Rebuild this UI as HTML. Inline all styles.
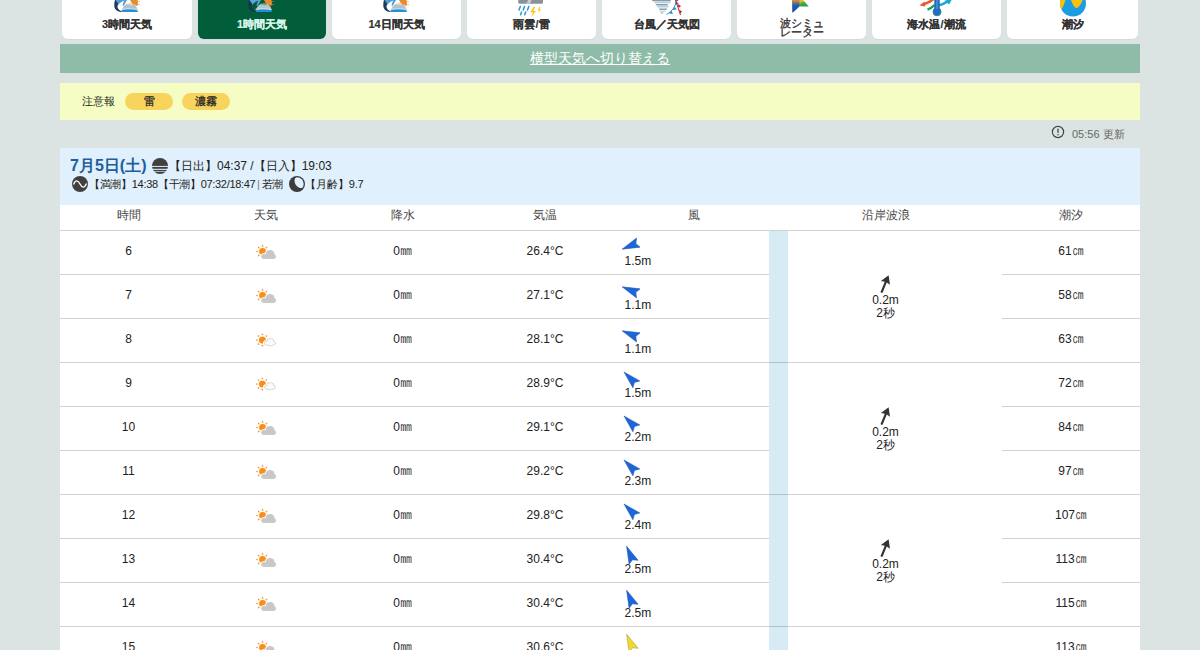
<!DOCTYPE html>
<html><head><meta charset="utf-8">
<style>
*{box-sizing:border-box;margin:0;padding:0}
html,body{width:1200px;height:650px;overflow:hidden;background:#dce4e3;font-family:"Liberation Sans",sans-serif;color:#222}
.abs{position:absolute}
.tab{position:absolute;top:-40px;height:79px;background:#fff;border-radius:6px;box-shadow:0 1px 0 rgba(0,0,0,0.04)}
.tab.on{background:#025d3a}
.tab .lb{position:absolute;left:0;right:0;top:57px;text-align:center;font-size:11px;font-weight:bold;color:#333;line-height:14px;-webkit-text-stroke:0.15px #333}
.tab.on .lb{color:#d8f5ea;-webkit-text-stroke:0.15px #d8f5ea}
.tab svg{position:absolute;top:0}
#gbar{left:60px;top:44px;width:1080px;height:29px;background:#8fbca8}
#gbar a{position:absolute;left:0;right:0;top:6px;text-align:center;color:#fff;font-size:14px;line-height:16px;text-decoration:underline}
#ybar{left:60px;top:83px;width:1080px;height:37px;background:#f5fcc4}
#ybar .t{position:absolute;left:22px;top:12px;font-size:11px;line-height:13px;color:#1a1a1a}
.badge{position:absolute;top:10px;height:17px;width:48px;border-radius:9px;background:#f8d45e;font-size:11px;line-height:17px;text-align:center;color:#222;-webkit-text-stroke:0.25px #222}
#upd{left:1072px;top:128px;font-size:11px;line-height:13px;color:#666}
#blue{left:60px;top:148px;width:1080px;height:57px;background:#e0f0fc}
#tbl{left:60px;top:205px;width:1080px;height:460px;background:#fff}
.hd{position:absolute;top:4px;font-size:12px;line-height:14px;color:#444;text-align:center}
.hl{position:absolute;height:1px;background:rgba(0,0,0,0.176)}
.u{display:inline-block;transform:scaleY(1.3);transform-origin:50% 85%}
.c{position:absolute;font-size:12px;line-height:14px;text-align:center;color:#222}
</style></head><body>

<!-- tabs -->
<div class="tab" style="left:62px;width:130px"><div class="lb">3時間天気</div></div>
<div class="tab on" style="left:198px;width:128px"><div class="lb">1時間天気</div></div>
<div class="tab" style="left:332px;width:129px"><div class="lb">14日間天気</div></div>
<div class="tab" style="left:467px;width:129px"><div class="lb">雨雲/雷</div></div>
<div class="tab" style="left:602px;width:129px"><div class="lb">台風／天気図</div></div>
<div class="tab" style="left:737px;width:129px"><div class="lb" style="top:56px;font-weight:normal;-webkit-text-stroke:0.35px #333">波シミュ</div><div class="lb" style="top:64.5px;font-weight:normal;-webkit-text-stroke:0.35px #333">レーター</div></div>
<div class="tab" style="left:872px;width:129px"><div class="lb">海水温/潮流</div></div>
<div class="tab" style="left:1007px;width:131px"><div class="lb">潮汐</div></div>

<div id="gbar" class="abs"><a>横型天気へ切り替える</a></div>

<div id="ybar" class="abs"><span class="t">注意報</span>
<div class="badge" style="left:65px">雷</div>
<div class="badge" style="left:122px">濃霧</div>
</div>

<div id="upd" class="abs">05:56 更新</div>

<div id="blue" class="abs">
<div class="abs" style="left:10px;top:8px;font-size:16px;font-weight:bold;color:#1f5e9c;line-height:20px">7月5日(土)</div>
<div class="abs" style="left:92px;top:10px;width:16px;height:16px"><svg width="16" height="16" viewBox="0 0 16 16"><defs><clipPath id="cc"><circle cx="8" cy="8" r="8"/></clipPath></defs><g clip-path="url(#cc)"><rect x="0" y="0" width="16" height="7.9" fill="#404040"/><rect x="0" y="8.9" width="16" height="1.9" fill="#404040"/><rect x="0" y="11.9" width="16" height="1.3" fill="#404040"/><rect x="0" y="13.8" width="16" height="2.2" fill="#404040"/></g></svg></div>
<div class="abs" style="left:109px;top:11px;font-size:12px;line-height:14px;color:#222">【日出】04:37 /【日入】19:03</div>
<div class="abs" style="left:12px;top:28px;width:16px;height:16px"><svg width="16" height="16" viewBox="0 0 16 16"><circle cx="8" cy="8" r="8" fill="#404040"/><path d="M1.5,8.5 C3.5,3.5 6,4 8,8 C10,12 12.5,12.5 14.5,7.5" fill="none" stroke="#fff" stroke-width="1.4"/></svg></div>
<div class="abs" style="left:29px;top:29px;font-size:11px;line-height:14px;color:#222;letter-spacing:-0.3px">【満潮】14:38【干潮】07:32/18:47<span style="color:#6f7f8c;margin:0 2px 0 1.5px">|</span>若潮</div>
<div class="abs" style="left:229px;top:28px;width:16px;height:16px"><svg width="16" height="16" viewBox="0 0 16 16"><defs><clipPath id="mc"><circle cx="8" cy="8" r="6.7"/></clipPath></defs><circle cx="8" cy="8" r="8" fill="#3c3c3c"/><g clip-path="url(#mc)"><ellipse cx="10.6" cy="6.3" rx="4.6" ry="6.2" transform="rotate(-32 10.6 6.3)" fill="#e0f0fc"/></g></svg></div>
<div class="abs" style="left:245.3px;top:29px;font-size:11px;line-height:14px;color:#222;letter-spacing:-0.15px">【月齢】9.7</div>
</div>

<div id="tbl" class="abs"></div>
<svg style="position:absolute;left:113.5px;top:0" width="28" height="14" viewBox="0 0 28 14">
<path d="M1,0 L10,0 C7,1 4,3 3.5,6 C3.2,8.5 5,10.5 8,11.5 L7,12 C3,11.5 0.3,9 0.3,5.5 C0.3,3 0.6,1.2 1,0Z" fill="#1d3a5c"/>
<path d="M1.5,0 L12,0 C9,0.8 6,2.5 4.5,5 C3.8,3 2.5,1.5 1.5,0Z" fill="#4f9bd6"/>
<path d="M4,6 C5,3 8,1.5 11,1.5 C9,3 7,5 6,8 C5,7.5 4.3,7 4,6Z" fill="#ffffff"/>
<path d="M10.5,0 L13,0 C12,2 10.5,4 9.5,6 L8.5,5.5 C9,3.5 9.8,1.5 10.5,0Z" fill="#4f9bd6"/>
<path d="M16,0 L23.5,0 L24,3 C24,4.5 23.5,5.5 23,6 L18,3.5 Z" fill="#ea8a2a"/>
<circle cx="25" cy="1.5" r="0.6" fill="#ea8a2a"/><circle cx="25" cy="4.6" r="0.6" fill="#ea8a2a"/>
<path d="M8,10 C9,6 12,3.2 16,3.2 C20,3.2 23,6 23.5,10 Z" fill="#b9c0c6"/>
<path d="M13.5,4.5 C15,3.8 17,4 18.5,5" stroke="#ffffff" stroke-width="0.6" fill="none"/>
<path d="M7.5,9.3 C12,8.3 19,8.3 23.8,9.6" stroke="#bfe6fa" stroke-width="0.9" fill="none"/>
<path d="M7.5,10.2 C12,9.2 19,9.2 23.8,10.5 L23.8,12 L8,12 Z" fill="#2091d8"/>
</svg><svg style="position:absolute;left:247.5px;top:0" width="28" height="14" viewBox="0 0 28 14">
<path d="M1,0 L10,0 C7,1 4,3 3.5,6 C3.2,8.5 5,10.5 8,11.5 L7,12 C3,11.5 0.3,9 0.3,5.5 C0.3,3 0.6,1.2 1,0Z" fill="#1a3350"/>
<path d="M1.5,0 L12,0 C9,0.8 6,2.5 4.5,5 C3.8,3 2.5,1.5 1.5,0Z" fill="#5aa6d8"/>
<path d="M4,6 C5,3 8,1.5 11,1.5 C9,3 7,5 6,8 C5,7.5 4.3,7 4,6Z" fill="#0b5a3c"/>
<path d="M10.5,0 L13,0 C12,2 10.5,4 9.5,6 L8.5,5.5 C9,3.5 9.8,1.5 10.5,0Z" fill="#5aa6d8"/>
<path d="M16,0 L23.5,0 L24,3 C24,4.5 23.5,5.5 23,6 L18,3.5 Z" fill="#ea8a2a"/>
<circle cx="25" cy="1.5" r="0.6" fill="#ea8a2a"/><circle cx="25" cy="4.6" r="0.6" fill="#ea8a2a"/>
<path d="M8,10 C9,6 12,3.2 16,3.2 C20,3.2 23,6 23.5,10 Z" fill="#b7c7c4"/>
<path d="M13.5,4.5 C15,3.8 17,4 18.5,5" stroke="#0b5a3c" stroke-width="0.6" fill="none"/>
<path d="M7.5,9.3 C12,8.3 19,8.3 23.8,9.6" stroke="#bfe6fa" stroke-width="0.9" fill="none"/>
<path d="M7.5,10.2 C12,9.2 19,9.2 23.8,10.5 L23.8,12 L8,12 Z" fill="#2091d8"/>
</svg><svg style="position:absolute;left:382.5px;top:0" width="28" height="14" viewBox="0 0 28 14">
<path d="M1,0 L10,0 C7,1 4,3 3.5,6 C3.2,8.5 5,10.5 8,11.5 L7,12 C3,11.5 0.3,9 0.3,5.5 C0.3,3 0.6,1.2 1,0Z" fill="#1d3a5c"/>
<path d="M1.5,0 L12,0 C9,0.8 6,2.5 4.5,5 C3.8,3 2.5,1.5 1.5,0Z" fill="#4f9bd6"/>
<path d="M4,6 C5,3 8,1.5 11,1.5 C9,3 7,5 6,8 C5,7.5 4.3,7 4,6Z" fill="#ffffff"/>
<path d="M10.5,0 L13,0 C12,2 10.5,4 9.5,6 L8.5,5.5 C9,3.5 9.8,1.5 10.5,0Z" fill="#4f9bd6"/>
<path d="M16,0 L23.5,0 L24,3 C24,4.5 23.5,5.5 23,6 L18,3.5 Z" fill="#ea8a2a"/>
<circle cx="25" cy="1.5" r="0.6" fill="#ea8a2a"/><circle cx="25" cy="4.6" r="0.6" fill="#ea8a2a"/>
<path d="M8,10 C9,6 12,3.2 16,3.2 C20,3.2 23,6 23.5,10 Z" fill="#b9c0c6"/>
<path d="M13.5,4.5 C15,3.8 17,4 18.5,5" stroke="#ffffff" stroke-width="0.6" fill="none"/>
<path d="M7.5,9.3 C12,8.3 19,8.3 23.8,9.6" stroke="#bfe6fa" stroke-width="0.9" fill="none"/>
<path d="M7.5,10.2 C12,9.2 19,9.2 23.8,10.5 L23.8,12 L8,12 Z" fill="#2091d8"/>
</svg><svg style="position:absolute;left:518px;top:0" width="28" height="18" viewBox="0 0 28 18">
<rect x="0.2" y="-4" width="24.8" height="7.8" rx="1.6" fill="#8a9299"/>
<path d="M10,0 L13.5,0 L12,3.8 L8.5,3.8Z" fill="#c3cad0"/>
<g stroke="#2a95d8" stroke-width="1.5" stroke-linecap="round">
<line x1="2.3" y1="6.4" x2="1" y2="10"/><line x1="6.5" y1="6.4" x2="5.2" y2="10"/><line x1="10.8" y1="6.4" x2="9.5" y2="10"/>
<line x1="3.6" y1="12" x2="2.6" y2="14.8"/><line x1="7.7" y1="12" x2="6.7" y2="14.8"/>
</g>
<path d="M15.5,7 L12.2,12.3 L15,12.3 L13.3,17 L18,11 L15.4,11 L17.2,7Z" fill="#f8c81c"/>
<path d="M21.5,7 L19.5,10.3 L21,10.3 L20,13 L23,9.5 L21.5,9.5 L22.6,7Z" fill="#f8c81c"/>
</svg><svg style="position:absolute;left:650px;top:0" width="34" height="16" viewBox="0 0 34 16">
<path d="M2,0 L21,0 L20.5,1.2 L2.5,1.2Z" fill="#8d99a2"/>
<path d="M4,1.5 L21,1.5 L20,3.2 L5,3.2Z" fill="#a8d2ec"/>
<path d="M5.5,4 L18,4 L17.5,5.4 L6.5,5.4Z" fill="#8d99a2"/>
<path d="M7,6 L19,6 L18,7.5 L8,7.5Z" fill="#a8d2ec"/>
<path d="M9,8.5 L17,8.5 L16.5,9.9 L9.5,9.9Z" fill="#8d99a2"/>
<path d="M9.5,10.8 L15.5,10.8 L15,11.8 L10,11.8Z" fill="#a8d2ec"/>
<path d="M10.5,12.6 L13.5,12.6 L13,13.5 L11,13.5Z" fill="#8d99a2"/>
<path d="M26.5,0 C26,5 23,11 16.5,14.5" stroke="#2f90d0" stroke-width="1" fill="none"/>
<path d="M25.5,1 L29,3.5 L25,5Z M24.4,6.5 L26.8,9.5 L22.5,10Z M21.5,10.8 L23,14 L19,13.5Z" fill="#2f90d0"/>
<path d="M25.5,0 C27,5 29,10 30.5,15" stroke="#c0202a" stroke-width="1" fill="none"/>
<path d="M26.3,0 L28.5,0 L26.8,1.5Z M27.5,4 L31,6 L28.8,8Z M29,9.5 L32,11.5 L30.3,13.5Z" fill="#c0202a"/>
</svg><svg style="position:absolute;left:790px;top:0" width="22" height="14" viewBox="0 0 22 14">
<defs><linearGradient id="wg1" x1="0" y1="0" x2="1" y2="1">
<stop offset="0" stop-color="#f08a2a"/><stop offset="0.35" stop-color="#e8c020"/><stop offset="0.6" stop-color="#38a848"/><stop offset="1" stop-color="#2a9a48"/></linearGradient>
<linearGradient id="wg2" x1="0" y1="0" x2="0" y2="1"><stop offset="0" stop-color="#f08a2a"/><stop offset="0.4" stop-color="#2060b0"/><stop offset="1" stop-color="#1a4a9a"/></linearGradient></defs>
<path d="M2,0 L13,0 L18.8,6.6 L9.5,6.5 Z" fill="url(#wg1)"/>
<path d="M2,0 L9.5,0 L9.5,6.5 L3,12.5 L2.3,12.5 Z" fill="url(#wg2)"/>
</svg><svg style="position:absolute;left:916px;top:0" width="40" height="18" viewBox="0 0 40 18">
<path d="M7,4.6 C10.5,3.5 14,2 17,-0.5" stroke="#e8582a" stroke-width="2.6" fill="none"/>
<path d="M3.5,5.6 L8.5,1.6 L9.2,6.6 Z" fill="#e8582a"/>
<path d="M11.5,9.6 C14,8.8 16.5,7 18.5,5.2" stroke="#1e9a5c" stroke-width="2.4" fill="none"/>
<path d="M23,5.2 C26.5,4.6 29.5,3 32.5,0.8" stroke="#1aa6d6" stroke-width="2.6" fill="none"/>
<path d="M28.5,0.8 L36,-0.8 L33,4.6 Z" fill="#1aa6d6"/>
<rect x="18.6" y="-3" width="4.8" height="14" rx="2.4" fill="#1e6ec8" stroke="#2a6a7a" stroke-width="0.6"/>
<circle cx="21" cy="11.8" r="4" fill="#1e6ec8" stroke="#2f7a80" stroke-width="0.8"/>
<rect x="20.2" y="-3" width="1.6" height="12" fill="#3d8fe6"/>
</svg><svg style="position:absolute;left:1058px;top:0" width="30" height="18" viewBox="0 0 30 18">
<defs><clipPath id="tc"><circle cx="15" cy="3.5" r="13"/></clipPath></defs>
<circle cx="15" cy="3.5" r="13" fill="#1c9de2"/>
<g clip-path="url(#tc)">
<path d="M0,0 L7.5,0 C6.5,3 5.5,6 3.5,9.5 L0,10Z" fill="#fbc00a"/>
<path d="M13,0 L24.5,0 C23.5,3 21.5,7 19,8 C16.5,8.5 14.5,4 13,0Z" fill="#fbc00a"/>
</g>
</svg><svg style="position:absolute;left:1051px;top:125px" width="14" height="14" viewBox="0 0 14 14"><circle cx="7" cy="7" r="5.6" fill="none" stroke="#444" stroke-width="1.2"/><rect x="6.35" y="3.6" width="1.3" height="4.4" rx="0.4" fill="#444"/><circle cx="7" cy="9.8" r="0.75" fill="#444"/></svg><div class="hd" style="left:60px;width:137px;top:208px">時間</div>
<div class="hd" style="left:197px;width:137px;top:208px">天気</div>
<div class="hd" style="left:334px;width:137px;top:208px">降水</div>
<div class="hd" style="left:471px;width:148px;top:208px">気温</div>
<div class="hd" style="left:619px;width:150px;top:208px">風</div>
<div class="hd" style="left:769px;width:233px;top:208px">沿岸波浪</div>
<div class="hd" style="left:1002px;width:138px;top:208px">潮汐</div>
<div class="hl" style="left:60px;width:1080px;top:230px"></div>
<div class="abs" style="left:769px;top:231px;width:19px;height:420px;background:#d7ebf5"></div>
<div class="hl" style="left:60px;width:709px;top:274px"></div>
<div class="hl" style="left:1002px;width:138px;top:274px"></div>
<div class="c" style="left:60px;width:137px;top:244px">6</div>
<div class="abs" style="left:254px;top:244px;width:24px;height:18px"><svg width="24" height="18" viewBox="0 0 24 18"><path d="M8.60,0.60L9.70,2.50L7.50,2.50Z" fill="#e9953c"/><path d="M13.48,2.62L12.91,4.74L11.36,3.19Z" fill="#e9953c"/><path d="M15.50,7.50L13.60,8.60L13.60,6.40Z" fill="#e9953c"/><path d="M13.48,12.38L11.36,11.81L12.91,10.26Z" fill="#e9953c"/><path d="M8.60,14.40L7.50,12.50L9.70,12.50Z" fill="#e9953c"/><path d="M3.72,12.38L4.29,10.26L5.84,11.81Z" fill="#e9953c"/><path d="M1.70,7.50L3.60,6.40L3.60,8.60Z" fill="#e9953c"/><path d="M3.72,2.62L5.84,3.19L4.29,4.74Z" fill="#e9953c"/><circle cx="8.6" cy="7.5" r="4.2" fill="#fff3d0"/><circle cx="8.6" cy="7.5" r="3.4" fill="#f68d1c"/><circle cx="16" cy="10.5" r="5.5" fill="#fff"/><circle cx="19.8" cy="12.6" r="3.1999999999999997" fill="#fff"/><circle cx="9.6" cy="12.5" r="3.3" fill="#fff"/><rect x="9.6" y="9.6" width="10.2" height="6.2" fill="#fff"/><circle cx="16" cy="10.5" r="4.6" fill="#c8c8c8"/><circle cx="19.8" cy="12.6" r="2.3" fill="#c8c8c8"/><circle cx="9.6" cy="12.5" r="2.4" fill="#c8c8c8"/><rect x="9.6" y="10.5" width="10.2" height="4.4" fill="#c8c8c8"/></svg></div>
<div class="c" style="left:334px;width:137px;top:244px">0<span class="u">㎜</span></div>
<div class="c" style="left:471px;width:148px;top:244px">26.4°C</div>
<div class="abs" style="left:620px;top:235.5px;width:20px;height:20px"><svg width="20" height="20" viewBox="0 0 20 20"><g transform="rotate(248 10 10)"><path d="M10,1.5L14.9,19L10,16.3L5.1,19Z" fill="#1c66d8" stroke="#1a55b0" stroke-width="0.5" stroke-linejoin="round"/></g></svg></div>
<div class="c" style="left:624.5px;text-align:left;top:254px">1.5m</div>
<div class="c" style="left:1002px;width:138px;top:244px">61<span class="u">㎝</span></div>
<div class="hl" style="left:60px;width:709px;top:318px"></div>
<div class="hl" style="left:1002px;width:138px;top:318px"></div>
<div class="c" style="left:60px;width:137px;top:288px">7</div>
<div class="abs" style="left:254px;top:288px;width:24px;height:18px"><svg width="24" height="18" viewBox="0 0 24 18"><path d="M8.60,0.60L9.70,2.50L7.50,2.50Z" fill="#e9953c"/><path d="M13.48,2.62L12.91,4.74L11.36,3.19Z" fill="#e9953c"/><path d="M15.50,7.50L13.60,8.60L13.60,6.40Z" fill="#e9953c"/><path d="M13.48,12.38L11.36,11.81L12.91,10.26Z" fill="#e9953c"/><path d="M8.60,14.40L7.50,12.50L9.70,12.50Z" fill="#e9953c"/><path d="M3.72,12.38L4.29,10.26L5.84,11.81Z" fill="#e9953c"/><path d="M1.70,7.50L3.60,6.40L3.60,8.60Z" fill="#e9953c"/><path d="M3.72,2.62L5.84,3.19L4.29,4.74Z" fill="#e9953c"/><circle cx="8.6" cy="7.5" r="4.2" fill="#fff3d0"/><circle cx="8.6" cy="7.5" r="3.4" fill="#f68d1c"/><circle cx="16" cy="10.5" r="5.5" fill="#fff"/><circle cx="19.8" cy="12.6" r="3.1999999999999997" fill="#fff"/><circle cx="9.6" cy="12.5" r="3.3" fill="#fff"/><rect x="9.6" y="9.6" width="10.2" height="6.2" fill="#fff"/><circle cx="16" cy="10.5" r="4.6" fill="#c8c8c8"/><circle cx="19.8" cy="12.6" r="2.3" fill="#c8c8c8"/><circle cx="9.6" cy="12.5" r="2.4" fill="#c8c8c8"/><rect x="9.6" y="10.5" width="10.2" height="4.4" fill="#c8c8c8"/></svg></div>
<div class="c" style="left:334px;width:137px;top:288px">0<span class="u">㎜</span></div>
<div class="c" style="left:471px;width:148px;top:288px">27.1°C</div>
<div class="abs" style="left:620px;top:279.5px;width:20px;height:20px"><svg width="20" height="20" viewBox="0 0 20 20"><g transform="rotate(292 10 10)"><path d="M10,1.5L14.9,19L10,16.3L5.1,19Z" fill="#1c66d8" stroke="#1a55b0" stroke-width="0.5" stroke-linejoin="round"/></g></svg></div>
<div class="c" style="left:624.5px;text-align:left;top:298px">1.1m</div>
<div class="c" style="left:1002px;width:138px;top:288px">58<span class="u">㎝</span></div>
<div class="hl" style="left:60px;width:709px;top:362px"></div>
<div class="hl" style="left:1002px;width:138px;top:362px"></div>
<div class="hl" style="left:769px;width:233px;top:362px"></div>
<div class="c" style="left:60px;width:137px;top:332px">8</div>
<div class="abs" style="left:254px;top:332px;width:24px;height:18px"><svg width="24" height="18" viewBox="0 0 24 18"><path d="M8.40,1.20L9.50,3.10L7.30,3.10Z" fill="#e9953c"/><path d="M13.28,3.22L12.71,5.34L11.16,3.79Z" fill="#e9953c"/><path d="M15.30,8.10L13.40,9.20L13.40,7.00Z" fill="#e9953c"/><path d="M13.28,12.98L11.16,12.41L12.71,10.86Z" fill="#e9953c"/><path d="M8.40,15.00L7.30,13.10L9.50,13.10Z" fill="#e9953c"/><path d="M3.52,12.98L4.09,10.86L5.64,12.41Z" fill="#e9953c"/><path d="M1.50,8.10L3.40,7.00L3.40,9.20Z" fill="#e9953c"/><path d="M3.52,3.22L5.64,3.79L4.09,5.34Z" fill="#e9953c"/><circle cx="8.4" cy="8.1" r="4.2" fill="#fff3d0"/><circle cx="8.4" cy="8.1" r="3.4" fill="#f68d1c"/><circle cx="16.3" cy="10.2" r="5.1" fill="#fff"/><circle cx="19.7" cy="11.3" r="3.1" fill="#fff"/><circle cx="12.1" cy="11.3" r="3.1" fill="#fff"/><rect x="12.1" y="8.7" width="7.6" height="5.7" fill="#fff"/><circle cx="16.3" cy="10.2" r="4.05" fill="#d2d2d2"/><circle cx="19.7" cy="11.3" r="2.0500000000000003" fill="#d2d2d2"/><circle cx="12.1" cy="11.3" r="2.0500000000000003" fill="#d2d2d2"/><rect x="12.1" y="9.75" width="7.6" height="3.6" fill="#d2d2d2"/><circle cx="16.3" cy="10.2" r="3.2" fill="#fbfbfb"/><circle cx="19.7" cy="11.3" r="1.2000000000000002" fill="#fbfbfb"/><circle cx="12.1" cy="11.3" r="1.2000000000000002" fill="#fbfbfb"/><rect x="12.1" y="10.6" width="7.6" height="1.9000000000000001" fill="#fbfbfb"/></svg></div>
<div class="c" style="left:334px;width:137px;top:332px">0<span class="u">㎜</span></div>
<div class="c" style="left:471px;width:148px;top:332px">28.1°C</div>
<div class="abs" style="left:620px;top:323.5px;width:20px;height:20px"><svg width="20" height="20" viewBox="0 0 20 20"><g transform="rotate(292 10 10)"><path d="M10,1.5L14.9,19L10,16.3L5.1,19Z" fill="#1c66d8" stroke="#1a55b0" stroke-width="0.5" stroke-linejoin="round"/></g></svg></div>
<div class="c" style="left:624.5px;text-align:left;top:342px">1.1m</div>
<div class="c" style="left:1002px;width:138px;top:332px">63<span class="u">㎝</span></div>
<div class="hl" style="left:60px;width:709px;top:406px"></div>
<div class="hl" style="left:1002px;width:138px;top:406px"></div>
<div class="c" style="left:60px;width:137px;top:376px">9</div>
<div class="abs" style="left:254px;top:376px;width:24px;height:18px"><svg width="24" height="18" viewBox="0 0 24 18"><path d="M8.40,1.20L9.50,3.10L7.30,3.10Z" fill="#e9953c"/><path d="M13.28,3.22L12.71,5.34L11.16,3.79Z" fill="#e9953c"/><path d="M15.30,8.10L13.40,9.20L13.40,7.00Z" fill="#e9953c"/><path d="M13.28,12.98L11.16,12.41L12.71,10.86Z" fill="#e9953c"/><path d="M8.40,15.00L7.30,13.10L9.50,13.10Z" fill="#e9953c"/><path d="M3.52,12.98L4.09,10.86L5.64,12.41Z" fill="#e9953c"/><path d="M1.50,8.10L3.40,7.00L3.40,9.20Z" fill="#e9953c"/><path d="M3.52,3.22L5.64,3.79L4.09,5.34Z" fill="#e9953c"/><circle cx="8.4" cy="8.1" r="4.2" fill="#fff3d0"/><circle cx="8.4" cy="8.1" r="3.4" fill="#f68d1c"/><circle cx="16.3" cy="10.2" r="5.1" fill="#fff"/><circle cx="19.7" cy="11.3" r="3.1" fill="#fff"/><circle cx="12.1" cy="11.3" r="3.1" fill="#fff"/><rect x="12.1" y="8.7" width="7.6" height="5.7" fill="#fff"/><circle cx="16.3" cy="10.2" r="4.05" fill="#d2d2d2"/><circle cx="19.7" cy="11.3" r="2.0500000000000003" fill="#d2d2d2"/><circle cx="12.1" cy="11.3" r="2.0500000000000003" fill="#d2d2d2"/><rect x="12.1" y="9.75" width="7.6" height="3.6" fill="#d2d2d2"/><circle cx="16.3" cy="10.2" r="3.2" fill="#fbfbfb"/><circle cx="19.7" cy="11.3" r="1.2000000000000002" fill="#fbfbfb"/><circle cx="12.1" cy="11.3" r="1.2000000000000002" fill="#fbfbfb"/><rect x="12.1" y="10.6" width="7.6" height="1.9000000000000001" fill="#fbfbfb"/></svg></div>
<div class="c" style="left:334px;width:137px;top:376px">0<span class="u">㎜</span></div>
<div class="c" style="left:471px;width:148px;top:376px">28.9°C</div>
<div class="abs" style="left:620px;top:367.5px;width:20px;height:20px"><svg width="20" height="20" viewBox="0 0 20 20"><g transform="rotate(315 10 10)"><path d="M10,1.5L14.9,19L10,16.3L5.1,19Z" fill="#1c66d8" stroke="#1a55b0" stroke-width="0.5" stroke-linejoin="round"/></g></svg></div>
<div class="c" style="left:624.5px;text-align:left;top:386px">1.5m</div>
<div class="c" style="left:1002px;width:138px;top:376px">72<span class="u">㎝</span></div>
<div class="hl" style="left:60px;width:709px;top:450px"></div>
<div class="hl" style="left:1002px;width:138px;top:450px"></div>
<div class="c" style="left:60px;width:137px;top:420px">10</div>
<div class="abs" style="left:254px;top:420px;width:24px;height:18px"><svg width="24" height="18" viewBox="0 0 24 18"><path d="M8.60,0.60L9.70,2.50L7.50,2.50Z" fill="#e9953c"/><path d="M13.48,2.62L12.91,4.74L11.36,3.19Z" fill="#e9953c"/><path d="M15.50,7.50L13.60,8.60L13.60,6.40Z" fill="#e9953c"/><path d="M13.48,12.38L11.36,11.81L12.91,10.26Z" fill="#e9953c"/><path d="M8.60,14.40L7.50,12.50L9.70,12.50Z" fill="#e9953c"/><path d="M3.72,12.38L4.29,10.26L5.84,11.81Z" fill="#e9953c"/><path d="M1.70,7.50L3.60,6.40L3.60,8.60Z" fill="#e9953c"/><path d="M3.72,2.62L5.84,3.19L4.29,4.74Z" fill="#e9953c"/><circle cx="8.6" cy="7.5" r="4.2" fill="#fff3d0"/><circle cx="8.6" cy="7.5" r="3.4" fill="#f68d1c"/><circle cx="16" cy="10.5" r="5.5" fill="#fff"/><circle cx="19.8" cy="12.6" r="3.1999999999999997" fill="#fff"/><circle cx="9.6" cy="12.5" r="3.3" fill="#fff"/><rect x="9.6" y="9.6" width="10.2" height="6.2" fill="#fff"/><circle cx="16" cy="10.5" r="4.6" fill="#c8c8c8"/><circle cx="19.8" cy="12.6" r="2.3" fill="#c8c8c8"/><circle cx="9.6" cy="12.5" r="2.4" fill="#c8c8c8"/><rect x="9.6" y="10.5" width="10.2" height="4.4" fill="#c8c8c8"/></svg></div>
<div class="c" style="left:334px;width:137px;top:420px">0<span class="u">㎜</span></div>
<div class="c" style="left:471px;width:148px;top:420px">29.1°C</div>
<div class="abs" style="left:620px;top:411.5px;width:20px;height:20px"><svg width="20" height="20" viewBox="0 0 20 20"><g transform="rotate(315 10 10)"><path d="M10,1.5L14.9,19L10,16.3L5.1,19Z" fill="#1c66d8" stroke="#1a55b0" stroke-width="0.5" stroke-linejoin="round"/></g></svg></div>
<div class="c" style="left:624.5px;text-align:left;top:430px">2.2m</div>
<div class="c" style="left:1002px;width:138px;top:420px">84<span class="u">㎝</span></div>
<div class="hl" style="left:60px;width:709px;top:494px"></div>
<div class="hl" style="left:1002px;width:138px;top:494px"></div>
<div class="hl" style="left:769px;width:233px;top:494px"></div>
<div class="c" style="left:60px;width:137px;top:464px">11</div>
<div class="abs" style="left:254px;top:464px;width:24px;height:18px"><svg width="24" height="18" viewBox="0 0 24 18"><path d="M8.60,0.60L9.70,2.50L7.50,2.50Z" fill="#e9953c"/><path d="M13.48,2.62L12.91,4.74L11.36,3.19Z" fill="#e9953c"/><path d="M15.50,7.50L13.60,8.60L13.60,6.40Z" fill="#e9953c"/><path d="M13.48,12.38L11.36,11.81L12.91,10.26Z" fill="#e9953c"/><path d="M8.60,14.40L7.50,12.50L9.70,12.50Z" fill="#e9953c"/><path d="M3.72,12.38L4.29,10.26L5.84,11.81Z" fill="#e9953c"/><path d="M1.70,7.50L3.60,6.40L3.60,8.60Z" fill="#e9953c"/><path d="M3.72,2.62L5.84,3.19L4.29,4.74Z" fill="#e9953c"/><circle cx="8.6" cy="7.5" r="4.2" fill="#fff3d0"/><circle cx="8.6" cy="7.5" r="3.4" fill="#f68d1c"/><circle cx="16" cy="10.5" r="5.5" fill="#fff"/><circle cx="19.8" cy="12.6" r="3.1999999999999997" fill="#fff"/><circle cx="9.6" cy="12.5" r="3.3" fill="#fff"/><rect x="9.6" y="9.6" width="10.2" height="6.2" fill="#fff"/><circle cx="16" cy="10.5" r="4.6" fill="#c8c8c8"/><circle cx="19.8" cy="12.6" r="2.3" fill="#c8c8c8"/><circle cx="9.6" cy="12.5" r="2.4" fill="#c8c8c8"/><rect x="9.6" y="10.5" width="10.2" height="4.4" fill="#c8c8c8"/></svg></div>
<div class="c" style="left:334px;width:137px;top:464px">0<span class="u">㎜</span></div>
<div class="c" style="left:471px;width:148px;top:464px">29.2°C</div>
<div class="abs" style="left:620px;top:455.5px;width:20px;height:20px"><svg width="20" height="20" viewBox="0 0 20 20"><g transform="rotate(315 10 10)"><path d="M10,1.5L14.9,19L10,16.3L5.1,19Z" fill="#1c66d8" stroke="#1a55b0" stroke-width="0.5" stroke-linejoin="round"/></g></svg></div>
<div class="c" style="left:624.5px;text-align:left;top:474px">2.3m</div>
<div class="c" style="left:1002px;width:138px;top:464px">97<span class="u">㎝</span></div>
<div class="hl" style="left:60px;width:709px;top:538px"></div>
<div class="hl" style="left:1002px;width:138px;top:538px"></div>
<div class="c" style="left:60px;width:137px;top:508px">12</div>
<div class="abs" style="left:254px;top:508px;width:24px;height:18px"><svg width="24" height="18" viewBox="0 0 24 18"><path d="M8.60,0.60L9.70,2.50L7.50,2.50Z" fill="#e9953c"/><path d="M13.48,2.62L12.91,4.74L11.36,3.19Z" fill="#e9953c"/><path d="M15.50,7.50L13.60,8.60L13.60,6.40Z" fill="#e9953c"/><path d="M13.48,12.38L11.36,11.81L12.91,10.26Z" fill="#e9953c"/><path d="M8.60,14.40L7.50,12.50L9.70,12.50Z" fill="#e9953c"/><path d="M3.72,12.38L4.29,10.26L5.84,11.81Z" fill="#e9953c"/><path d="M1.70,7.50L3.60,6.40L3.60,8.60Z" fill="#e9953c"/><path d="M3.72,2.62L5.84,3.19L4.29,4.74Z" fill="#e9953c"/><circle cx="8.6" cy="7.5" r="4.2" fill="#fff3d0"/><circle cx="8.6" cy="7.5" r="3.4" fill="#f68d1c"/><circle cx="16" cy="10.5" r="5.5" fill="#fff"/><circle cx="19.8" cy="12.6" r="3.1999999999999997" fill="#fff"/><circle cx="9.6" cy="12.5" r="3.3" fill="#fff"/><rect x="9.6" y="9.6" width="10.2" height="6.2" fill="#fff"/><circle cx="16" cy="10.5" r="4.6" fill="#c8c8c8"/><circle cx="19.8" cy="12.6" r="2.3" fill="#c8c8c8"/><circle cx="9.6" cy="12.5" r="2.4" fill="#c8c8c8"/><rect x="9.6" y="10.5" width="10.2" height="4.4" fill="#c8c8c8"/></svg></div>
<div class="c" style="left:334px;width:137px;top:508px">0<span class="u">㎜</span></div>
<div class="c" style="left:471px;width:148px;top:508px">29.8°C</div>
<div class="abs" style="left:620px;top:499.5px;width:20px;height:20px"><svg width="20" height="20" viewBox="0 0 20 20"><g transform="rotate(315 10 10)"><path d="M10,1.5L14.9,19L10,16.3L5.1,19Z" fill="#1c66d8" stroke="#1a55b0" stroke-width="0.5" stroke-linejoin="round"/></g></svg></div>
<div class="c" style="left:624.5px;text-align:left;top:518px">2.4m</div>
<div class="c" style="left:1002px;width:138px;top:508px">107<span class="u">㎝</span></div>
<div class="hl" style="left:60px;width:709px;top:582px"></div>
<div class="hl" style="left:1002px;width:138px;top:582px"></div>
<div class="c" style="left:60px;width:137px;top:552px">13</div>
<div class="abs" style="left:254px;top:552px;width:24px;height:18px"><svg width="24" height="18" viewBox="0 0 24 18"><path d="M8.60,0.60L9.70,2.50L7.50,2.50Z" fill="#e9953c"/><path d="M13.48,2.62L12.91,4.74L11.36,3.19Z" fill="#e9953c"/><path d="M15.50,7.50L13.60,8.60L13.60,6.40Z" fill="#e9953c"/><path d="M13.48,12.38L11.36,11.81L12.91,10.26Z" fill="#e9953c"/><path d="M8.60,14.40L7.50,12.50L9.70,12.50Z" fill="#e9953c"/><path d="M3.72,12.38L4.29,10.26L5.84,11.81Z" fill="#e9953c"/><path d="M1.70,7.50L3.60,6.40L3.60,8.60Z" fill="#e9953c"/><path d="M3.72,2.62L5.84,3.19L4.29,4.74Z" fill="#e9953c"/><circle cx="8.6" cy="7.5" r="4.2" fill="#fff3d0"/><circle cx="8.6" cy="7.5" r="3.4" fill="#f68d1c"/><circle cx="16" cy="10.5" r="5.5" fill="#fff"/><circle cx="19.8" cy="12.6" r="3.1999999999999997" fill="#fff"/><circle cx="9.6" cy="12.5" r="3.3" fill="#fff"/><rect x="9.6" y="9.6" width="10.2" height="6.2" fill="#fff"/><circle cx="16" cy="10.5" r="4.6" fill="#c8c8c8"/><circle cx="19.8" cy="12.6" r="2.3" fill="#c8c8c8"/><circle cx="9.6" cy="12.5" r="2.4" fill="#c8c8c8"/><rect x="9.6" y="10.5" width="10.2" height="4.4" fill="#c8c8c8"/></svg></div>
<div class="c" style="left:334px;width:137px;top:552px">0<span class="u">㎜</span></div>
<div class="c" style="left:471px;width:148px;top:552px">30.4°C</div>
<div class="abs" style="left:620px;top:543.5px;width:20px;height:20px"><svg width="20" height="20" viewBox="0 0 20 20"><g transform="rotate(336.5 10 10)"><path d="M10,1.5L14.9,19L10,16.3L5.1,19Z" fill="#1c66d8" stroke="#1a55b0" stroke-width="0.5" stroke-linejoin="round"/></g></svg></div>
<div class="c" style="left:624.5px;text-align:left;top:562px">2.5m</div>
<div class="c" style="left:1002px;width:138px;top:552px">113<span class="u">㎝</span></div>
<div class="hl" style="left:60px;width:709px;top:626px"></div>
<div class="hl" style="left:1002px;width:138px;top:626px"></div>
<div class="hl" style="left:769px;width:233px;top:626px"></div>
<div class="c" style="left:60px;width:137px;top:596px">14</div>
<div class="abs" style="left:254px;top:596px;width:24px;height:18px"><svg width="24" height="18" viewBox="0 0 24 18"><path d="M8.60,0.60L9.70,2.50L7.50,2.50Z" fill="#e9953c"/><path d="M13.48,2.62L12.91,4.74L11.36,3.19Z" fill="#e9953c"/><path d="M15.50,7.50L13.60,8.60L13.60,6.40Z" fill="#e9953c"/><path d="M13.48,12.38L11.36,11.81L12.91,10.26Z" fill="#e9953c"/><path d="M8.60,14.40L7.50,12.50L9.70,12.50Z" fill="#e9953c"/><path d="M3.72,12.38L4.29,10.26L5.84,11.81Z" fill="#e9953c"/><path d="M1.70,7.50L3.60,6.40L3.60,8.60Z" fill="#e9953c"/><path d="M3.72,2.62L5.84,3.19L4.29,4.74Z" fill="#e9953c"/><circle cx="8.6" cy="7.5" r="4.2" fill="#fff3d0"/><circle cx="8.6" cy="7.5" r="3.4" fill="#f68d1c"/><circle cx="16" cy="10.5" r="5.5" fill="#fff"/><circle cx="19.8" cy="12.6" r="3.1999999999999997" fill="#fff"/><circle cx="9.6" cy="12.5" r="3.3" fill="#fff"/><rect x="9.6" y="9.6" width="10.2" height="6.2" fill="#fff"/><circle cx="16" cy="10.5" r="4.6" fill="#c8c8c8"/><circle cx="19.8" cy="12.6" r="2.3" fill="#c8c8c8"/><circle cx="9.6" cy="12.5" r="2.4" fill="#c8c8c8"/><rect x="9.6" y="10.5" width="10.2" height="4.4" fill="#c8c8c8"/></svg></div>
<div class="c" style="left:334px;width:137px;top:596px">0<span class="u">㎜</span></div>
<div class="c" style="left:471px;width:148px;top:596px">30.4°C</div>
<div class="abs" style="left:620px;top:587.5px;width:20px;height:20px"><svg width="20" height="20" viewBox="0 0 20 20"><g transform="rotate(336.5 10 10)"><path d="M10,1.5L14.9,19L10,16.3L5.1,19Z" fill="#1c66d8" stroke="#1a55b0" stroke-width="0.5" stroke-linejoin="round"/></g></svg></div>
<div class="c" style="left:624.5px;text-align:left;top:606px">2.5m</div>
<div class="c" style="left:1002px;width:138px;top:596px">115<span class="u">㎝</span></div>
<div class="hl" style="left:60px;width:709px;top:670px"></div>
<div class="hl" style="left:1002px;width:138px;top:670px"></div>
<div class="c" style="left:60px;width:137px;top:640px">15</div>
<div class="abs" style="left:254px;top:640px;width:24px;height:18px"><svg width="24" height="18" viewBox="0 0 24 18"><path d="M8.60,0.60L9.70,2.50L7.50,2.50Z" fill="#e9953c"/><path d="M13.48,2.62L12.91,4.74L11.36,3.19Z" fill="#e9953c"/><path d="M15.50,7.50L13.60,8.60L13.60,6.40Z" fill="#e9953c"/><path d="M13.48,12.38L11.36,11.81L12.91,10.26Z" fill="#e9953c"/><path d="M8.60,14.40L7.50,12.50L9.70,12.50Z" fill="#e9953c"/><path d="M3.72,12.38L4.29,10.26L5.84,11.81Z" fill="#e9953c"/><path d="M1.70,7.50L3.60,6.40L3.60,8.60Z" fill="#e9953c"/><path d="M3.72,2.62L5.84,3.19L4.29,4.74Z" fill="#e9953c"/><circle cx="8.6" cy="7.5" r="4.2" fill="#fff3d0"/><circle cx="8.6" cy="7.5" r="3.4" fill="#f68d1c"/><circle cx="16" cy="10.5" r="5.5" fill="#fff"/><circle cx="19.8" cy="12.6" r="3.1999999999999997" fill="#fff"/><circle cx="9.6" cy="12.5" r="3.3" fill="#fff"/><rect x="9.6" y="9.6" width="10.2" height="6.2" fill="#fff"/><circle cx="16" cy="10.5" r="4.6" fill="#c8c8c8"/><circle cx="19.8" cy="12.6" r="2.3" fill="#c8c8c8"/><circle cx="9.6" cy="12.5" r="2.4" fill="#c8c8c8"/><rect x="9.6" y="10.5" width="10.2" height="4.4" fill="#c8c8c8"/></svg></div>
<div class="c" style="left:334px;width:137px;top:640px">0<span class="u">㎜</span></div>
<div class="c" style="left:471px;width:148px;top:640px">30.6°C</div>
<div class="abs" style="left:620px;top:631.5px;width:20px;height:20px"><svg width="20" height="20" viewBox="0 0 20 20"><g transform="rotate(336.5 10 10)"><path d="M10,1.5L14.9,19L10,16.3L5.1,19Z" fill="#f3da2a" stroke="#9a9650" stroke-width="0.5" stroke-linejoin="round"/></g></svg></div>
<div class="c" style="left:1002px;width:138px;top:640px">113<span class="u">㎝</span></div>
<div class="abs" style="left:875.2px;top:273.5px;width:20px;height:20px"><svg width="20" height="20" viewBox="0 0 20 20"><g transform="rotate(22.5 10 10)"><path d="M10,0.6 L14.9,8.75 L11.1,8 L11.1,19 Q10,19.8 8.9,19 L8.9,8 L5.1,8.75 Z" fill="#333"/></g></svg></div>
<div class="c" style="left:769px;width:233px;top:294px;line-height:13px">0.2m<br>2秒</div>
<div class="abs" style="left:875.2px;top:405.5px;width:20px;height:20px"><svg width="20" height="20" viewBox="0 0 20 20"><g transform="rotate(22.5 10 10)"><path d="M10,0.6 L14.9,8.75 L11.1,8 L11.1,19 Q10,19.8 8.9,19 L8.9,8 L5.1,8.75 Z" fill="#333"/></g></svg></div>
<div class="c" style="left:769px;width:233px;top:426px;line-height:13px">0.2m<br>2秒</div>
<div class="abs" style="left:875.2px;top:537.5px;width:20px;height:20px"><svg width="20" height="20" viewBox="0 0 20 20"><g transform="rotate(22.5 10 10)"><path d="M10,0.6 L14.9,8.75 L11.1,8 L11.1,19 Q10,19.8 8.9,19 L8.9,8 L5.1,8.75 Z" fill="#333"/></g></svg></div>
<div class="c" style="left:769px;width:233px;top:558px;line-height:13px">0.2m<br>2秒</div>

</body></html>
